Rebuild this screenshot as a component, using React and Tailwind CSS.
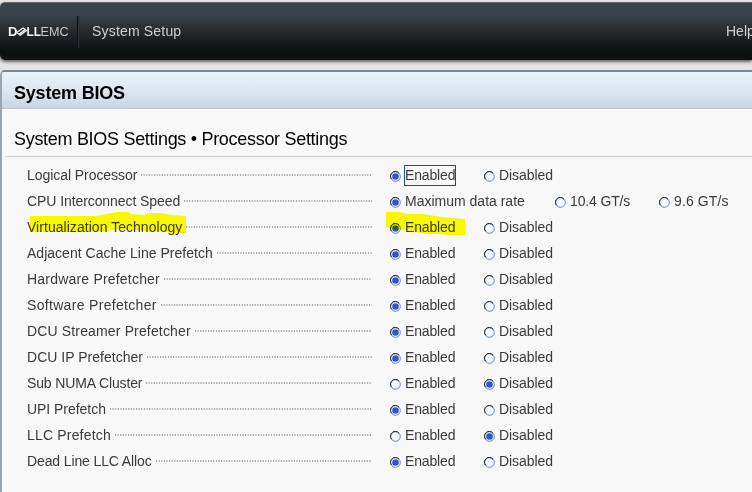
import React from "react";

const toggles = (on) => [
  { label: "Enabled", on, w: "w-[94px]", track: "tracking-[-0.15px]" },
  { label: "Disabled", on: !on, w: "w-[94px]", track: "tracking-[-0.07px]" },
];

const rows = [
  { label: "Logical Processor", track: "tracking-[-0.06px]", options: toggles(true), focus: true },
  {
    label: "CPU Interconnect Speed",
    track: "tracking-[-0.08px]",
    options: [
      { label: "Maximum data rate", on: true, w: "w-[165px]", track: "tracking-[0px]" },
      { label: "10.4 GT/s", on: false, w: "w-[104px]", track: "tracking-[-0.15px]" },
      { label: "9.6 GT/s", on: false, w: "w-[90px]", track: "tracking-[0.1px]" },
    ],
  },
  { label: "Virtualization Technology", track: "tracking-[0.04px]", options: toggles(true), marked: true },
  { label: "Adjacent Cache Line Prefetch", track: "tracking-[0.02px]", options: toggles(true) },
  { label: "Hardware Prefetcher", track: "tracking-[0.2px]", options: toggles(true) },
  { label: "Software Prefetcher", track: "tracking-[0.32px]", options: toggles(true) },
  { label: "DCU Streamer Prefetcher", track: "tracking-[0.15px]", options: toggles(true) },
  { label: "DCU IP Prefetcher", track: "tracking-[0.02px]", options: toggles(true) },
  { label: "Sub NUMA Cluster", track: "tracking-[-0.13px]", options: toggles(false) },
  { label: "UPI Prefetch", track: "tracking-[-0.04px]", options: toggles(true) },
  { label: "LLC Prefetch", track: "tracking-[0.18px]", options: toggles(false) },
  { label: "Dead Line LLC Alloc", track: "tracking-[-0.12px]", options: toggles(true) },
];

function Radio({ on }) {
  return (
    <svg className="mt-[2px] mr-[4px] shrink-0" width="11" height="11" viewBox="0 0 11 11">
      <circle cx="5.5" cy="5.5" r="4.8" fill="none" stroke="#5f84bb" />
      <path d="M1.5 8.2 A4.8 4.8 0 0 1 9 2.2" fill="none" stroke="#252a32" />
      {on && <circle cx="5.5" cy="5.5" r="3.3" fill="#3157cc" />}
    </svg>
  );
}

function SettingRow({ row }) {
  return (
    <div className="relative flex h-[26px] items-center">
      <div className="flex w-[345px] items-center">
        <span className={`whitespace-nowrap ${row.track}`}>{row.label}</span>
        <svg className="ml-[4px] h-[2px] min-w-0 flex-1">
          <line x1="0" y1="1" x2="400" y2="1" stroke="#8e8e8e" strokeWidth="1.5" strokeDasharray="1.15 1.45" />
        </svg>
      </div>
      <div className="ml-[18px] flex">
        {row.options.map((o, i) => (
          <div key={o.label} className={`flex items-center whitespace-nowrap ${o.w}`}>
            <Radio on={o.on} />
            <span className={`h-[19px] leading-[19px] ${o.track} ${row.focus && i === 0 ? "outline outline-[#28477f]" : ""}`}>
              {o.label}
            </span>
          </div>
        ))}
      </div>
      {row.marked && (
        <>
          <svg className="absolute top-[-2px] left-[3px] mix-blend-multiply" width="156" height="22">
            <path d="M0 4H65L72 3 82 1 87 0H98L101 2 114 3 120 1H131L141 3 156 4V21H140L133 19 120 20 110 18H99L88 17 76 19 55 20H0Z" fill="#ffff00" />
          </svg>
          <svg className="absolute top-[-3px] left-[359px] mix-blend-multiply" width="80" height="26">
            <path d="M0 1H13L22 3H37L49 5 65 7 79 8V24H63L53 23H42L30 21 18 19 5 18 0 16Z" fill="#ffff00" />
          </svg>
        </>
      )}
    </div>
  );
}

export default function App() {
  return (
    <div className="h-[492px] w-[752px] overflow-hidden bg-[#e3e3e3] pt-[2px] font-['Liberation_Sans',Arial,sans-serif] text-[14px] text-[#3a3a3a]">
      <header className="flex h-[58px] items-center rounded-l-[5px] border-t border-[#626970] bg-[linear-gradient(#3a434b_0%,#3a424a_20%,#25292d_50%,#101313_80%,#0e0e0e_100%)] text-[#d0d0d0] shadow-[0_2px_3px_#666]">
        <div className="flex w-[77px] shrink-0 items-center pl-[8px]">
          <svg width="62" height="16" viewBox="0 -2 62 16" fontFamily="Liberation Sans, Arial, sans-serif" fill="#f4f4f4">
            <text x="0" y="10.3" fontSize="12.5" fontWeight="700" textLength="9.5" lengthAdjust="spacingAndGlyphs">D</text>
            <path d="M8.8 6.6 15 2 17.2 3.6 11 8.2ZM11.5 9.6 19.2 4" fill="none" stroke="#f4f4f4" strokeWidth="1.3" />
            <text x="18.5" y="10.3" fontSize="12.5" fontWeight="700" textLength="14.5" lengthAdjust="spacingAndGlyphs">LL</text>
            <text x="32.5" y="10.3" fontSize="12.5" fill="#c6c6c6" textLength="28" lengthAdjust="spacingAndGlyphs">EMC</text>
          </svg>
        </div>
        <div className="h-[32px] w-[2px] bg-[linear-gradient(90deg,#0c0e10_50%,#30353a_50%)]" />
        <span className="ml-[13px] tracking-[0.18px]">System Setup</span>
        <span className="ml-auto w-[26px] shrink-0 whitespace-nowrap">Help</span>
      </header>
      <main className="mt-[10px] h-[430px] overflow-hidden rounded-tl-[5px] border-t-2 border-l-2 border-t-[#7d8791] border-l-[#9aa3b0] bg-[#f8f8f8]">
        <h1 className="flex h-[37px] items-center border-b border-[#bcc8dc] bg-[linear-gradient(#e8f2fa,#dce7f1_50%,#c7d5e7)] pt-[6px] pl-[12px] text-[18px] font-bold tracking-[-0.2px] text-black">System BIOS</h1>
        <div className="ml-[3px] h-[48px] border-b border-[#d0d0d0] pt-[17px] pl-[9px] text-[18px] tracking-[-0.3px] text-black">System BIOS Settings • Processor Settings</div>
        <div className="pt-[5px] pl-[25px]">
          {rows.map((row) => (
            <SettingRow key={row.label} row={row} />
          ))}
        </div>
      </main>
    </div>
  );
}
